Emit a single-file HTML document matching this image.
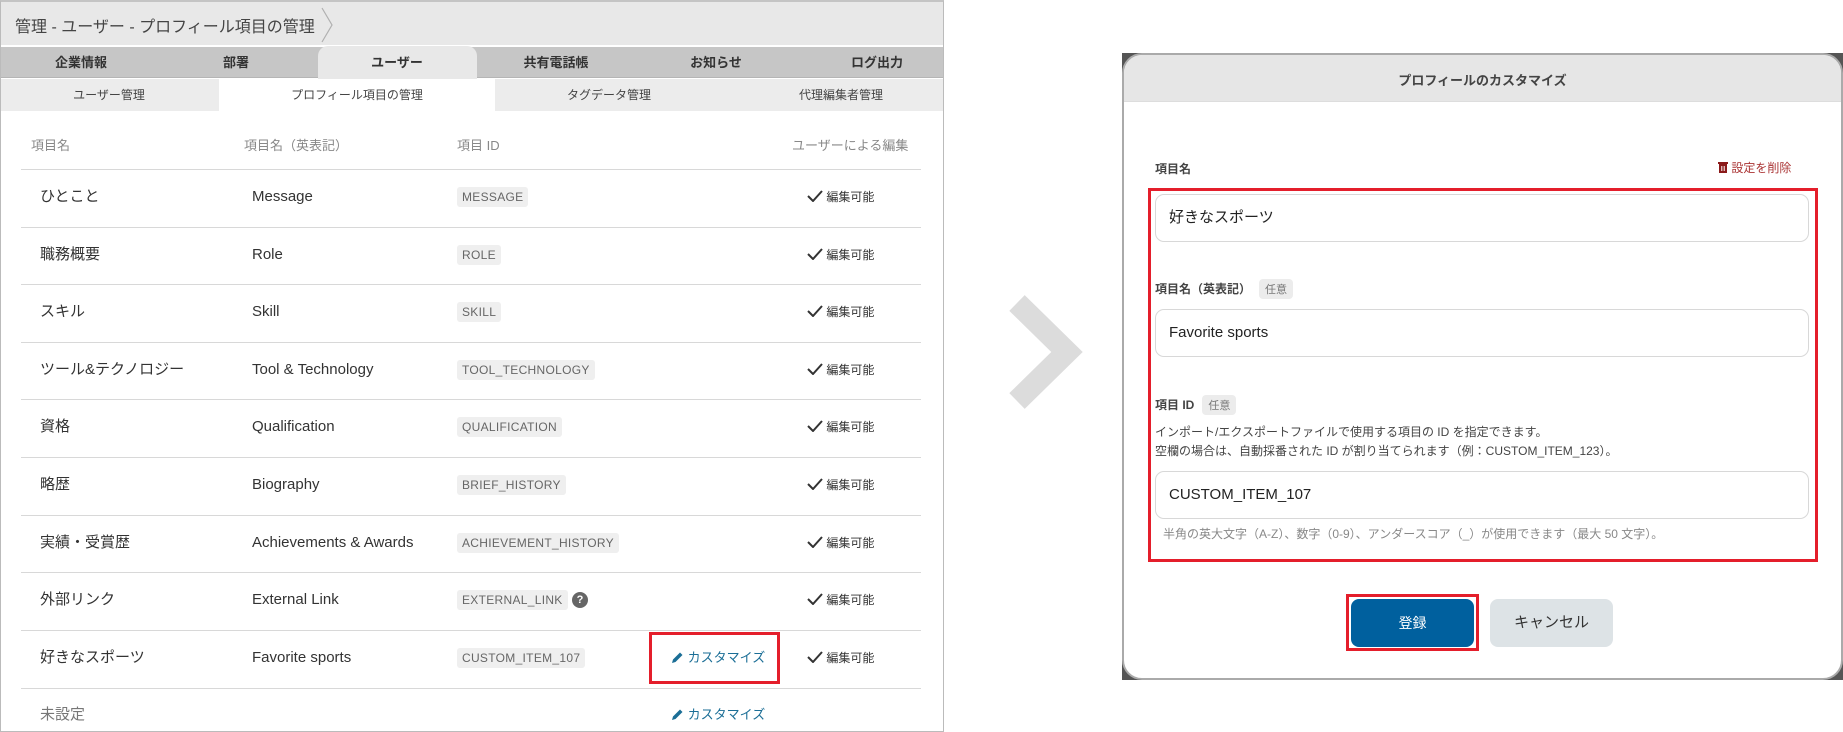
<!DOCTYPE html>
<html><head><meta charset="utf-8"><style>
*{box-sizing:border-box;margin:0;padding:0}
body{width:1843px;height:732px;background:#fff;font-family:"Liberation Sans","Noto Sans CJK JP",sans-serif;color:#333;position:relative;overflow:hidden}
.a{position:absolute;white-space:nowrap}
#left{position:absolute;left:0;top:0;width:944px;height:732px;border:1px solid #bbb;border-top:2px solid #c4c4c4;overflow:hidden}
.bc{position:absolute;left:0;top:0;width:944px;height:43px;background:#e8e8e8}
.tabs{position:absolute;left:0;top:45px;width:944px;height:31px;background:#c6c6c6;border-bottom:1px solid #b5b5b5}
.tab{position:absolute;top:0;height:31px;line-height:31px;font-size:13px;font-weight:bold;color:#333;text-align:center;transform:translateX(-50%)}
.act{position:absolute;left:317px;top:44px;width:159px;height:33px;background:#e8e8e8;border-radius:10px 10px 0 0}
.sub{position:absolute;left:0;top:77px;width:944px;height:32px;background:#ececec}
.st{position:absolute;top:77px;height:32px;line-height:32px;font-size:12px;color:#444;transform:translateX(-50%)}
.hd{font-size:13px;color:#888;top:133px}
.ln{position:absolute;left:20px;width:900px;height:1px;background:#d8d8d8}
.c1,.c2{font-size:15px;color:#333;line-height:20px;height:20px}
.c1{left:39px}
.c2{left:251px}
.chip{left:456px;background:#efefef;color:#666;font-size:12px;padding:0 5px;line-height:20px;height:20px;border-radius:3px;letter-spacing:.3px}
.ok{left:806px;font-size:12px;color:#333;line-height:20px}
.cz{font-size:13px;color:#1b6e96;line-height:20px}
#modal{position:absolute;left:1122px;top:53px;width:721px;height:627px;background:#555}
#mi{position:absolute;inset:0;background:#fff;border:2px solid #aaa;border-radius:20px;overflow:hidden}
.lbl{font-size:12px;font-weight:bold;color:#444}
.inp{position:absolute;left:1155px;width:654px;height:48px;border:1px solid #d8d8d8;border-radius:9px;background:#fff;font-size:15px;color:#222;padding-left:13px;line-height:46px}
.opt{display:inline-block;background:#ececec;color:#777;font-size:11px;font-weight:normal;padding:2px 6px;border-radius:4px;margin-left:8px}
.red{position:absolute;border:3px solid #e41e2b}
</style></head><body>
<div id="left">
<div class="bc"></div>
<div class="a" style="left:14px;top:11px;font-size:16px;color:#444">管理 - ユーザー - プロフィール項目の管理</div>
<svg class="a" style="left:318px;top:4px" width="16" height="38"><path d="M3 2 L13 19 L3 36" fill="none" stroke="#b0b0b0" stroke-width="1.2"/></svg>
<div class="tabs"></div>
<div class="act"></div>
<div class="tab" style="left:80px;top:45px">企業情報</div>
<div class="tab" style="left:235px;top:45px">部署</div>
<div class="tab" style="left:396px;top:45px">ユーザー</div>
<div class="tab" style="left:555px;top:45px">共有電話帳</div>
<div class="tab" style="left:715px;top:45px">お知らせ</div>
<div class="tab" style="left:876px;top:45px">ログ出力</div>
<div class="sub"></div>
<div class="a" style="left:218px;top:77px;width:276px;height:33px;background:#fff"></div>
<div class="st" style="left:108px">ユーザー管理</div>
<div class="st" style="left:356px">プロフィール項目の管理</div>
<div class="st" style="left:608px">タグデータ管理</div>
<div class="st" style="left:840px">代理編集者管理</div>
<div class="a hd" style="left:30px">項目名</div>
<div class="a hd" style="left:243px">項目名（英表記）</div>
<div class="a hd" style="left:456px">項目 ID</div>
<div class="a hd" style="left:791px">ユーザーによる編集</div>
<div class="ln" style="top:167px"></div><div class="ln" style="top:225px"></div><div class="ln" style="top:282px"></div><div class="ln" style="top:340px"></div><div class="ln" style="top:397px"></div><div class="ln" style="top:455px"></div><div class="ln" style="top:513px"></div><div class="ln" style="top:570px"></div><div class="ln" style="top:628px"></div><div class="ln" style="top:686px"></div>
<div class="a c1" style="top:185px">ひとこと</div><div class="a c2" style="top:185px">Message</div><div class="a chip" style="top:185px">MESSAGE</div>
<div class="a c1" style="top:243px">職務概要</div><div class="a c2" style="top:243px">Role</div><div class="a chip" style="top:243px">ROLE</div>
<div class="a c1" style="top:300px">スキル</div><div class="a c2" style="top:300px">Skill</div><div class="a chip" style="top:300px">SKILL</div>
<div class="a c1" style="top:358px">ツール&amp;テクノロジー</div><div class="a c2" style="top:358px">Tool &amp; Technology</div><div class="a chip" style="top:358px">TOOL_TECHNOLOGY</div>
<div class="a c1" style="top:415px">資格</div><div class="a c2" style="top:415px">Qualification</div><div class="a chip" style="top:415px">QUALIFICATION</div>
<div class="a c1" style="top:473px">略歴</div><div class="a c2" style="top:473px">Biography</div><div class="a chip" style="top:473px">BRIEF_HISTORY</div>
<div class="a c1" style="top:531px">実績・受賞歴</div><div class="a c2" style="top:531px">Achievements &amp; Awards</div><div class="a chip" style="top:531px">ACHIEVEMENT_HISTORY</div>
<div class="a c1" style="top:588px">外部リンク</div><div class="a c2" style="top:588px">External Link</div><div class="a chip" style="top:588px">EXTERNAL_LINK</div>
<div class="a" style="left:571px;top:590px;width:16px;height:16px;border-radius:50%;background:#666;color:#fff;font-size:11px;font-weight:bold;text-align:center;line-height:16px">?</div>
<div class="a c1" style="top:646px">好きなスポーツ</div><div class="a c2" style="top:646px">Favorite sports</div><div class="a chip" style="top:646px">CUSTOM_ITEM_107</div>
<div class="a c1" style="top:703px;color:#777">未設定</div>
<div class="red" style="left:648px;top:630px;width:131px;height:52px"></div>
<div class="a cz" style="left:670px;top:646px"><svg width="13" height="13" style="vertical-align:-2px"><path d="M1 12 L2 8.5 L9 1.5 L11.5 4 L4.5 11 Z" fill="#1b6e96"/></svg> カスタマイズ</div>
<div class="a cz" style="left:670px;top:703px"><svg width="13" height="13" style="vertical-align:-2px"><path d="M1 12 L2 8.5 L9 1.5 L11.5 4 L4.5 11 Z" fill="#1b6e96"/></svg> カスタマイズ</div>
<div class="a ok" style="top:185px"><svg width="16" height="12" style="vertical-align:-1px"><path d="M1 6 L6 11 L15 1" fill="none" stroke="#333" stroke-width="2"/></svg> 編集可能</div>
<div class="a ok" style="top:243px"><svg width="16" height="12" style="vertical-align:-1px"><path d="M1 6 L6 11 L15 1" fill="none" stroke="#333" stroke-width="2"/></svg> 編集可能</div>
<div class="a ok" style="top:300px"><svg width="16" height="12" style="vertical-align:-1px"><path d="M1 6 L6 11 L15 1" fill="none" stroke="#333" stroke-width="2"/></svg> 編集可能</div>
<div class="a ok" style="top:358px"><svg width="16" height="12" style="vertical-align:-1px"><path d="M1 6 L6 11 L15 1" fill="none" stroke="#333" stroke-width="2"/></svg> 編集可能</div>
<div class="a ok" style="top:415px"><svg width="16" height="12" style="vertical-align:-1px"><path d="M1 6 L6 11 L15 1" fill="none" stroke="#333" stroke-width="2"/></svg> 編集可能</div>
<div class="a ok" style="top:473px"><svg width="16" height="12" style="vertical-align:-1px"><path d="M1 6 L6 11 L15 1" fill="none" stroke="#333" stroke-width="2"/></svg> 編集可能</div>
<div class="a ok" style="top:531px"><svg width="16" height="12" style="vertical-align:-1px"><path d="M1 6 L6 11 L15 1" fill="none" stroke="#333" stroke-width="2"/></svg> 編集可能</div>
<div class="a ok" style="top:588px"><svg width="16" height="12" style="vertical-align:-1px"><path d="M1 6 L6 11 L15 1" fill="none" stroke="#333" stroke-width="2"/></svg> 編集可能</div>
<div class="a ok" style="top:646px"><svg width="16" height="12" style="vertical-align:-1px"><path d="M1 6 L6 11 L15 1" fill="none" stroke="#333" stroke-width="2"/></svg> 編集可能</div>
</div>
<svg class="a" style="left:1005px;top:295px" width="80" height="115"><path d="M12 8 L62 57 L12 106" fill="none" stroke="#dcdcdc" stroke-width="22"/></svg>
<div id="modal"><div id="mi">
<div class="a" style="left:0;top:0;width:721px;height:47px;background:#e6e6e6;border-bottom:1px solid #ddd"></div>
<div class="a" style="left:0;top:15px;width:717px;text-align:center;font-size:13px;font-weight:bold;color:#444">プロフィールのカスタマイズ</div>
</div></div>
<div class="a lbl" style="left:1155px;top:160px">項目名</div>
<div class="a" style="left:1718px;top:159px;font-size:12px;color:#a33"><svg width="10" height="12" style="vertical-align:-1px"><rect x="0" y="1" width="10" height="2" fill="#8b1a1a"/><rect x="1" y="3" width="8" height="9" fill="#8b1a1a"/><rect x="3.3" y="5" width="1" height="5" fill="#fff"/><rect x="5.7" y="5" width="1" height="5" fill="#fff"/></svg> 設定を削除</div>
<div class="red" style="left:1148px;top:188px;width:670px;height:374px"></div>
<div class="inp" style="top:194px">好きなスポーツ</div>
<div class="a lbl" style="left:1155px;top:279px">項目名（英表記）<span class="opt">任意</span></div>
<div class="inp" style="top:309px">Favorite sports</div>
<div class="a lbl" style="left:1155px;top:395px">項目 ID<span class="opt">任意</span></div>
<div class="a" style="left:1155px;top:423px;font-size:12px;color:#444;line-height:19px">インポート/エクスポートファイルで使用する項目の ID を指定できます。<br>空欄の場合は、自動採番された ID が割り当てられます（例：CUSTOM_ITEM_123）。</div>
<div class="inp" style="top:471px">CUSTOM_ITEM_107</div>
<div class="a" style="left:1163px;top:525px;font-size:12px;color:#888">半角の英大文字（A-Z）、数字（0-9）、アンダースコア（_）が使用できます（最大 50 文字）。</div>
<div class="red" style="left:1346px;top:594px;width:133px;height:57px"></div>
<div class="a" style="left:1351px;top:599px;width:123px;height:48px;background:#00609e;border-radius:8px;color:#fff;font-size:14px;text-align:center;line-height:48px">登録</div>
<div class="a" style="left:1490px;top:599px;width:123px;height:48px;background:#dde3e6;border-radius:8px;color:#333;font-size:15px;text-align:center;line-height:48px">キャンセル</div>
</body></html>
